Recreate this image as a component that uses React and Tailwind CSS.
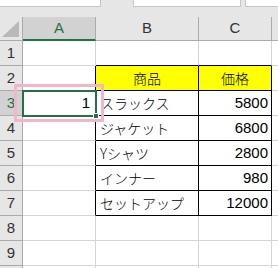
import React from "react";

const rows = [
  { n: 1 },
  { n: 2, b: "商品", c: "価格", head: true },
  { n: 3, a: "1", b: "スラックス", c: "5800" },
  { n: 4, b: "ジャケット", c: "6800" },
  { n: 5, b: "Yシャツ", c: "2800" },
  { n: 6, b: "インナー", c: "980" },
  { n: 7, b: "セットアップ", c: "12000" },
  { n: 8 },
  { n: 9 },
  { n: 10, hidden: true },
];

const inTable = (n) => n >= 2 && n <= 7;

export default function App() {
  return (
    <div className="relative w-[278px] h-[268px] overflow-hidden bg-white text-black font-['Liberation_Sans','Noto_Sans_CJK_JP',sans-serif]">
      {/* formula bar strip */}
      <div className="h-[17px] bg-[#e6e6e6] flex items-start">
        <div className="w-[101px] h-[7px] bg-white border-b border-r border-[#c6c6c6]" />
        <div className="ml-[32px] w-[108px] h-[7px] bg-white border-b border-x border-[#c6c6c6]" />
        <div className="ml-[4px] flex-1 h-[7px] bg-white border-b border-l border-[#c6c6c6]" />
      </div>

      {/* column headers */}
      <div className="flex h-[24px] bg-[#e6e6e6] text-[15px] text-[#333]">
        <div className="w-[23px] shrink-0 relative border-r border-b border-[#ababab]">
          <div className="absolute right-[3px] bottom-[3px] w-0 h-0 border-l-[17px] border-l-transparent border-b-[16px] border-b-[#b9b9b9]" />
        </div>
        <div className="w-[73px] shrink-0 flex items-center justify-center bg-[#d2d2d2] border-r border-[#ababab] border-b-2 border-b-[#217346] text-[#217346]">A</div>
        <div className="w-[103px] shrink-0 flex items-center justify-center border-r border-b border-[#ababab]">B</div>
        <div className="w-[73px] shrink-0 flex items-center justify-center border-r border-b border-[#ababab]">C</div>
        <div className="flex-1 border-b border-[#ababab]" />
      </div>

      {/* sheet rows */}
      {rows.map((r) => (
        <div key={r.n} className="flex h-[25px]">
          <div
            className={
              "w-[23px] shrink-0 flex items-center justify-center text-[15px] border-r border-b border-[#ababab] " +
              (r.n === 3 ? "bg-[#d2d2d2] text-[#217346]" : "bg-[#e6e6e6] text-[#333]")
            }
          >
            {r.hidden ? null : r.n}
          </div>
          <div
            className={
              "w-[73px] shrink-0 flex items-center justify-end pr-[5px] text-[15px] border-b border-[#d4d4d4] border-r " +
              (inTable(r.n) ? "border-r-black" : "border-r-[#d4d4d4]")
            }
          >
            {r.a}
          </div>
          <div
            className={
              "w-[103px] shrink-0 flex items-center text-[14px] font-light font-['Noto_Sans_CJK_JP',sans-serif] border-r border-b " +
              (r.head ? "justify-center bg-[#ffff00] " : "pl-[4px] ") +
              (inTable(r.n) || r.n === 1 ? "border-b-black " : "border-b-[#d4d4d4] ") +
              (inTable(r.n) ? "border-r-black" : "border-r-[#d4d4d4]")
            }
          >
            {r.b}
          </div>
          <div
            className={
              "w-[73px] shrink-0 flex items-center border-r border-b " +
              (r.head
                ? "justify-center bg-[#ffff00] text-[14px] font-light font-['Noto_Sans_CJK_JP',sans-serif] "
                : "justify-end pr-[3px] text-[15px] ") +
              (inTable(r.n) || r.n === 1 ? "border-b-black " : "border-b-[#d4d4d4] ") +
              (inTable(r.n) ? "border-r-black" : "border-r-[#d4d4d4]")
            }
          >
            {r.c}
          </div>
          <div className="flex-1 border-b border-[#d4d4d4]" />
        </div>
      ))}

      {/* active cell A3 with fill handle */}
      <div className="absolute left-[22px] top-[90px] w-[75px] h-[27px] border-2 border-[#217346]">
        <div className="absolute -right-[4px] -bottom-[4px] w-[6px] h-[6px] bg-[#217346] border border-white" />
      </div>

      {/* pink callout frame */}
      <div className="absolute left-[14px] top-[84px] w-[90px] h-[38px] border-[3px] border-[#f5b4ca]" />
    </div>
  );
}
